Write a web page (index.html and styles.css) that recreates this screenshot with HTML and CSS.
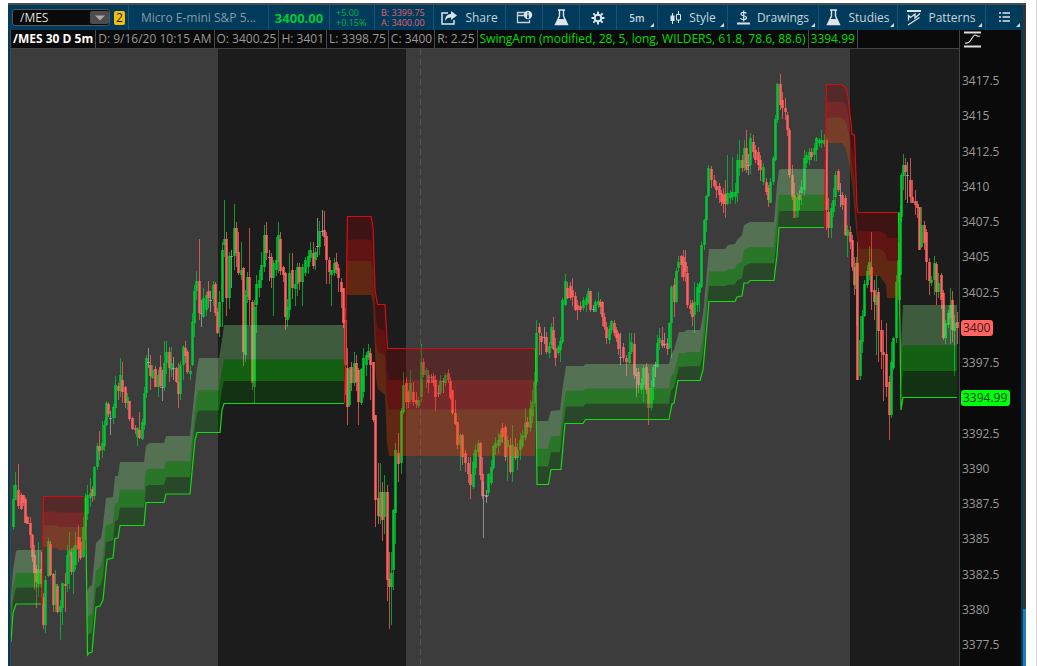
FILE: index.html
```html
<!DOCTYPE html>
<html lang="en">
<head>
<meta charset="utf-8">
<title>/MES chart</title>
<link rel="stylesheet" href="styles.css">
</head>
<body>
<div class="page">
<main class="window">
  <header class="toolbar">
    <div class="cell symbol">
      <div class="symbol-box"><input class="symbol-input" aria-label="Symbol" value="/MES"><button class="symbol-drop" aria-label="Choose symbol"><svg width="10" height="6" viewBox="0 0 10 6"><path d="M0 0.5H10L5 5.5Z" fill="#aaa"/></svg></button></div>
      <button class="link-badge">2</button>
    </div>
    <div class="cell name">Micro E-mini S&amp;P 5...</div>
    <div class="cell price">3400.00</div>
    <div class="cell pair up"><span>+5.00</span><span>+0.15%</span></div>
    <div class="cell pair down"><span>B: 3399.75</span><span>A: 3400.00</span></div>
    <button class="cell share"><svg width="17" height="14" viewBox="0 0 17 14"><path d="M7 2H1V13H13V9" fill="none" stroke="#dde3e6" stroke-width="1.5"/><path d="M10 0L16 4.5L10 9V6.5C7 6.500 5 7.500 4 10C4 6 6 3 10 3Z" fill="#dde3e6"/></svg>Share</button>
    <button class="cell info" aria-label="Info"><svg width="17" height="15" viewBox="0 0 17 15"><path d="M9 2.500H1.500V12.500H13.500V10M1.500 5.500H9" fill="none" stroke="#c8d0d5" stroke-width="1.3"/><circle cx="12" cy="5" r="4.200" fill="#dde3e6"/><path d="M12 4.500V7.500M12 2.200V3.500M11 7.500H13" stroke="#003b5c" stroke-width="1.4"/></svg></button>
    <button class="cell lab" aria-label="Lab"><svg width="15" height="17" viewBox="0 0 15 17"><path d="M4 1H11M5.500 1V7L1.500 15.500H13.500L9.500 7V1" fill="none" stroke="#dde3e6" stroke-width="1.4"/><path d="M4 10H11L13.500 16H1.500Z" fill="#dde3e6"/></svg></button>
    <button class="cell gear" aria-label="Settings"><svg width="14" height="14" viewBox="0 0 14 14"><g stroke="#dde3e6" stroke-width="2" fill="none"><circle cx="7" cy="7" r="3.300"/><path d="M7 .5V3M7 11V13.500M.5 7H3M11 7H13.500M2.400 2.400L4.200 4.200M9.800 9.800L11.600 11.600M2.400 11.600L4.200 9.800M9.800 4.200L11.600 2.400"/></g></svg></button>
    <button class="cell period more">5m</button>
    <button class="cell style more"><svg width="13" height="15" viewBox="0 0 13 15"><path d="M3.500 3V14M9.500 1V13" stroke="#dde3e6"/><path d="M1.500 5.500H5.500V11H1.500Z" fill="#dde3e6"/><path d="M7.500 4.500H11.500V10H7.500Z" fill="#003b5c" stroke="#dde3e6"/></svg>Style</button>
    <button class="cell drawings more"><svg width="13" height="15" viewBox="0 0 13 15"><path d="M9.500 3.500C8.500 2 4 1.800 4 4.200C4 6.500 9.500 5 9.500 7.700C9.500 10 4.500 10 3.500 8.200M6.700 .5V11.500" fill="none" stroke="#dde3e6" stroke-width="1.2"/><path d="M0 13.500H13" stroke="#dde3e6" stroke-width="2"/></svg>Drawings</button>
    <button class="cell studies more"><svg width="15" height="17" viewBox="0 0 15 17"><path d="M4 1H11M5.500 1V7L1.500 15.500H13.500L9.500 7V1" fill="none" stroke="#dde3e6" stroke-width="1.400"/><path d="M4 10H11L13.500 16H1.500Z" fill="#dde3e6"/></svg>Studies</button>
    <button class="cell patterns more"><svg width="14" height="16" viewBox="0 0 14 16"><path d="M0 1H14" stroke="#dde3e6" stroke-width="2"/><path d="M1.500 10.500V5.500L3.500 7.500L8 4V8L13 3.500M1 15L12.500 7.500" fill="none" stroke="#dde3e6" stroke-width="1.300"/></svg>Patterns</button>
    <button class="cell list more" aria-label="Menu"><svg width="11" height="11" viewBox="0 0 11 11"><path d="M0 1H2M3.500 1H11M0 5H2M3.500 5H11M0 9H2M3.500 9H11" stroke="#dde3e6" stroke-width="1.300"/></svg></button>
  </header>
  <div class="content">
    <section class="chart">
      <div class="legend">
        <b>/MES 30 D 5m</b><span>D: 9/16/20 10:15 AM</span><span>O: 3400.25</span><span>H: 3401</span><span>L: 3398.75</span><span>C: 3400</span><span>R: 2.25</span><span class="study">SwingArm (modified, 28, 5, long, WILDERS, 61.8, 78.6, 88.6)</span><span class="study">3394.99</span>
      </div>
      <div class="plot"><svg id="plot" viewBox="11 49 948 617" preserveAspectRatio="none" role="img" aria-label="Candlestick chart with SwingArm bands"></svg></div>
    </section>
    <aside class="axis">
      <button class="scale" aria-label="Axis scale"><svg width="17" height="17" viewBox="0 0 17 17"><path d="M0 1.500H17M0 15.500H17" stroke="#ddd" stroke-width="2"/><path d="M1 12C7 14 8 4 11 4C13 4 13 6 16 5" fill="none" stroke="#ddd" stroke-width="1.200"/></svg></button>
      <ul class="ticks"><li>3417.5</li><li>3415</li><li>3412.5</li><li>3410</li><li>3407.5</li><li>3405</li><li>3402.5</li><li class="last">3400</li><li>3397.5</li><li class="level">3394.99</li><li>3392.5</li><li>3390</li><li>3387.5</li><li>3385</li><li>3382.5</li><li>3380</li><li>3377.5</li></ul>
    </aside>
    <div class="rail"><div class="thumb"></div></div>
  </div>
</main>
</div>
<script src="chart.js"></script>
</body>
</html>
```
FILE: styles.css
```css
* { box-sizing: border-box; }
body { margin: 0; background: #fff; font-family: "Open Sans", "Noto Sans", sans-serif; font-size: 12px; line-height: 16px; color: #999; }
button { font: inherit; color: inherit; border: 0; padding: 0; background: none; }
.page { height: 100vh; padding: 3px 10px 0 8px; border-right: 1px solid #d4d4d4; overflow: hidden; }
.window { height: 100%; display: flex; flex-direction: column; background: #003b5c; border-top: 2px solid #4a4d50; }
.toolbar { flex: none; height: 25px; display: flex; padding-left: 2px; border-right: 3px solid #333; color: #c9d3d8; }
.cell { position: relative; flex: none; display: flex; align-items: center; justify-content: center; gap: 7px; white-space: nowrap; border-right: 1px solid #1d5170; }
.symbol { width: 119px; justify-content: flex-start; gap: 4px; padding-left: 2px; }
.symbol-box { display: flex; align-items: center; width: 98px; height: 17px; background: #0a0a0a; border: 1px solid #555; border-radius: 3px; }
.symbol-input { flex: 1; min-width: 0; height: 15px; padding: 0 7px; border: 0; background: none; color: #ddd; font: inherit; }
.symbol-drop { width: 19px; height: 13px; display: grid; place-items: center; background: #4c4c4c; border-radius: 2px; }
.link-badge { width: 11px; height: 14px; line-height: 13px; background: #f5bd0c; color: #222; border-radius: 2px; }
.name { flex: 1 1 139px; color: #8a98a0; }
.price { width: 61px; color: #00c832; font-size: 13px; font-weight: 700; }
.pair { flex-direction: column; gap: 0; font-size: 9px; line-height: 10px; align-items: flex-start; padding-left: 6px; }
.up { width: 45px; color: #00b43c; }
.down { width: 59px; color: #e0606c; }
.share { width: 72px; }
.info, .lab, .gear { width: 37px; }
.period { width: 41px; font-size: 10px; font-weight: 600; }
.style { width: 70px; }
.drawings { width: 91px; }
.studies { width: 79px; }
.patterns { width: 88px; }
.list { width: 37px; border-right: 0; }
.more::after { content: ""; position: absolute; right: 3px; bottom: 3px; border-style: solid; border-width: 0 0 4px 4px; border-color: transparent transparent #d5dce0; }
.content { flex: 1; min-height: 0; display: flex; padding-left: 2px; background: #003b5c; }
.chart { flex: 1; min-width: 0; display: flex; flex-direction: column; border-left: 1px solid #444; border-right: 1px solid #444; background: #0a0a0a; }
.legend { flex: none; height: 19px; display: flex; border-bottom: 1px solid #444; white-space: nowrap; line-height: 18px; }
.legend > * { padding: 0 2px; border-right: 1px solid #4a4a4a; }
.legend b { color: #fff; }
.legend .study { color: #00dc00; }
.plot { flex: 1; min-height: 0; }
.plot svg { display: block; width: 100%; height: 100%; }
.axis { width: 61px; flex: none; display: flex; flex-direction: column; background: #0a0a0a; border-top: 1px solid #0a0a0a; }
.scale { flex: none; width: 17px; height: 17px; margin-left: 4px; }
.ticks { flex: 1; display: flex; flex-direction: column; justify-content: space-between; align-items: flex-start; margin: 0; padding: 25px 0 13px 1px; list-style: none; }
.ticks li { height: 16px; padding: 0 1px; border-radius: 3px; }
.ticks .last { background: #ff6460; color: #451515; padding: 0 3px 0 2px; }
.ticks .level { background: #00ff0d; color: #073d07; padding: 0 3px 0 2px; }
.rail { width: 3px; flex: none; display: flex; flex-direction: column; justify-content: flex-end; margin-left: 2px; background: #333; }
.thumb { height: 9%; background: #1f7fbd; }
```
FILE: chart.js
```javascript
// Each candle: colour, x, high, body top, body bottom, low
const candles = `
g 13 485 499 527 530;g 15 472 485 500 500;r 18 464 490 506 509;r 21 493 495 509 510;r 23 495 495 503 506;r 25 497 499 523 523;r 27 516 517 524 524;r 30 517 523 535 548;r 32 534 535 557 562;r 34 545 555 573 590;r 36 565 569 582 608;g 38 542 570 584 597;r 41 552 569 584 597;r 43 593 597 625 629;g 45 576 580 625 633;g 48 538 541 576 577;r 50 541 544 575 576;r 53 573 574 605 612;g 55 570 584 605 612;r 57 584 586 612 613;g 60 600 606 612 640;g 62 583 583 608 625;r 65 573 584 586 612;g 67 545 555 584 592;g 69 532 550 555 589;r 71 548 552 572 575;g 73 546 548 572 594;g 75 532 545 565 570;r 78 525 537 549 562;r 80 537 542 558 560;g 83 517 527 557 558;g 85 493 498 527 540;g 87 485 495 514 520;g 90 478 493 498 507;r 92 486 489 496 502;g 94 466 467 496 500;g 97 443 446 467 470;r 99 431 446 451 460;g 102 421 443 450 458;g 104 420 425 446 451;g 106 401 403 425 426;r 108 402 404 414 417;w 110 411 418 419 435;g 113 404 407 418 424;g 115 376 385 408 418;r 118 383 386 391 400;g 120 358 375 391 397;r 122 362 380 392 403;r 125 386 387 403 408;g 127 393 397 403 410;r 129 401 401 419 421;r 132 417 418 429 430;r 135 425 428 430 434;g 137 427 428 437 446;r 139 412 430 438 439;g 142 419 422 439 440;g 144 387 393 425 430;g 146 355 358 393 398;w 148 348 362 363 368;r 150 355 365 376 390;g 152 365 370 378 379;r 155 366 369 387 387;g 158 370 375 387 397;r 160 355 367 386 388;w 162 370 387 388 401;g 164 341 363 387 391;g 166 341 352 363 374;r 169 347 352 368 382;g 171 347 363 370 377;w 173 357 368 369 380;r 176 367 368 382 383;r 178 363 382 394 408;g 180 361 365 394 400;g 183 345 347 365 380;r 185 341 348 356 363;r 187 350 352 372 374;g 190 366 371 374 380;g 192 313 322 365 366;g 194 285 291 323 337;g 196 271 281 291 300;r 199 239 281 313 320;w 201 300 313 314 327;g 203 288 298 317 318;g 206 292 295 310 316;r 208 281 291 298 308;w 210 291 300 301 312;g 213 281 285 299 306;r 215 282 284 313 316;r 217 308 312 333 334;g 219 291 302 327 337;g 222 242 250 302 327;g 224 200 239 245 257;r 226 232 239 298 316;g 229 252 256 298 309;w 231 250 256 257 288;g 234 204 228 256 270;r 236 222 228 253 267;r 238 232 252 273 275;g 241 242 270 275 280;r 243 267 268 352 366;g 245 290 295 355 362;g 247 272 277 297 303;r 249 228 277 300 325;r 252 300 302 383 390;g 254 300 307 387 403;g 256 275 284 305 333;g 259 270 280 288 297;g 261 252 265 280 288;g 264 225 235 267 272;r 266 222 235 253 260;w 269 250 257 258 281;r 271 253 257 278 288;g 273 260 263 278 316;g 276 237 260 270 276;g 278 222 235 262 273;r 280 232 239 271 275;r 283 266 267 275 282;r 285 272 273 317 330;g 287 299 307 320 327;g 289 253 273 310 318;r 292 253 270 288 299;g 295 270 284 289 306;g 297 263 267 284 296;r 299 263 267 282 290;g 302 264 267 282 306;g 305 257 260 273 276;g 308 250 256 267 274;g 310 242 250 258 262;r 313 242 253 266 269;g 315 248 252 260 270;w 317 218 246 247 257;g 319 221 231 247 255;w 322 210 231 232 236;r 324 211 230 237 246;r 326 232 236 260 284;r 329 257 260 272 284;g 331 270 270 275 306;g 334 258 263 273 276;r 336 253 262 270 274;r 338 264 268 278 292;r 341 278 282 292 308;r 343 288 288 323 328;r 345 308 320 365 395;r 347 348 368 407 425;g 349 367 370 405 407;r 351 362 367 383 391;g 354 352 363 383 386;r 356 355 363 382 391;r 358 368 370 402 425;g 361 368 369 403 405;g 363 348 358 392 398;g 366 352 355 365 376;g 368 344 351 358 360;r 370 348 353 365 400;r 373 362 362 420 422;r 375 415 415 500 527;r 378 463 498 516 524;g 380 463 492 517 524;r 382 482 492 520 541;g 384 475 492 517 534;r 387 485 492 580 601;r 389 552 579 587 629;g 391 552 573 587 625;g 393 509 510 570 590;g 395 443 450 513 544;r 398 433 453 464 482;g 401 408 411 463 474;g 403 372 385 412 414;r 406 377 383 402 409;r 408 390 392 402 408;g 410 370 383 400 404;r 413 382 392 402 406;r 416 392 400 404 408;g 418 397 400 406 408;g 421 344 362 397 402;r 423 358 362 375 377;g 426 368 370 375 388;r 428 370 375 383 393;w 431 374 377 378 383;r 433 373 376 383 386;r 435 375 380 397 411;w 438 385 393 394 397;g 440 375 381 393 395;w 443 378 381 382 393;g 445 373 375 383 386;r 448 369 373 380 383;r 450 377 381 398 400;r 452 390 390 413 415;r 455 400 413 424 425;r 457 422 422 445 449;g 460 433 435 445 471;r 462 434 435 457 465;r 465 450 453 463 472;r 468 457 463 474 483;r 470 457 474 485 499;g 473 453 462 487 489;g 475 445 450 468 475;g 478 440 443 452 457;r 480 442 443 475 480;r 482 457 474 496 499;w 483 482 495 496 538;w 486 490 495 497 503;g 488 473 474 493 496;g 491 460 467 483 485;g 493 445 446 468 470;g 495 437 443 448 455;g 498 433 440 446 454;g 500 430 435 442 446;r 502 423 428 437 443;r 505 425 427 457 461;g 507 436 440 447 481;r 510 438 445 472 474;g 512 425 445 472 482;r 515 438 447 458 460;g 517 443 450 458 470;g 520 433 440 450 460;g 522 430 435 446 448;g 525 408 423 438 440;r 527 417 422 427 434;g 530 400 408 428 432;g 532 390 402 416 423;g 534 372 382 403 407;g 536 320 333 382 385;r 539 323 327 333 355;r 541 333 336 342 355;w 544 327 337 338 344;r 546 332 337 352 354;g 549 342 346 353 358;g 551 323 327 345 348;r 553 317 330 349 350;r 555 338 348 358 366;g 558 345 347 353 355;g 560 337 341 350 362;g 562 298 300 342 344;g 565 274 281 305 306;r 567 282 288 298 299;r 570 282 286 298 300;r 572 278 290 297 306;r 575 292 296 310 311;r 577 300 305 310 320;r 580 302 306 310 312;g 583 297 300 308 311;g 586 294 298 305 312;g 588 288 291 302 304;r 590 291 291 310 312;w 593 305 309 310 312;g 595 300 302 312 312;g 598 292 301 305 308;r 600 299 302 307 314;r 602 301 302 317 326;r 604 313 317 327 330;r 606 322 327 338 344;g 609 325 329 340 344;g 611 320 321 330 334;r 614 320 323 333 336;r 616 327 330 338 342;r 618 332 334 349 355;w 620 333 357 358 365;r 623 343 347 358 362;r 626 355 358 362 376;g 629 333 352 363 364;g 631 333 342 352 354;r 634 333 344 375 379;w 636 368 375 376 397;r 638 368 372 385 393;g 641 378 383 390 394;g 643 365 368 385 402;r 646 363 367 390 394;r 648 373 388 408 425;g 651 380 388 408 411;g 653 365 367 387 400;w 655 362 365 366 377;g 657 335 343 367 368;g 659 328 338 343 350;r 662 327 340 346 348;w 664 333 344 345 348;r 667 338 343 349 355;g 669 322 323 348 349;g 671 285 287 323 358;r 674 278 285 302 317;g 676 268 271 302 303;g 678 256 262 268 272;r 681 255 256 265 277;r 683 250 257 277 281;r 685 250 262 272 282;r 687 266 273 305 308;r 690 300 305 309 314;r 692 300 303 317 326;g 694 282 302 315 333;g 697 283 287 305 312;g 699 282 284 293 312;g 701 242 245 287 288;g 704 219 220 245 250;g 706 195 196 220 232;g 708 165 168 196 197;r 711 166 169 180 188;r 714 175 180 186 188;r 716 181 186 190 198;r 719 183 186 195 203;r 721 190 193 202 206;r 723 188 195 204 213;r 725 180 194 204 218;g 727 155 193 204 205;g 730 190 193 198 204;g 732 157 192 197 200;g 735 183 192 197 204;g 737 154 160 193 202;g 739 140 160 168 176;r 742 155 160 168 172;g 744 140 148 168 171;r 746 130 148 170 173;w 748 154 165 166 175;g 750 133 138 165 174;r 753 135 142 152 158;r 755 145 150 160 163;r 758 147 152 165 171;r 760 155 160 170 181;g 763 163 167 182 185;r 766 178 182 192 195;r 768 185 188 200 207;g 770 178 182 203 203;g 773 156 158 182 185;g 775 115 119 160 161;g 777 83 84 120 123;r 780 74 84 105 110;r 782 92 100 108 119;r 785 98 108 112 120;r 787 112 115 130 136;r 789 128 130 175 178;r 792 165 175 197 200;r 794 183 195 218 218;g 797 193 197 217 218;r 799 190 195 200 210;g 801 180 187 193 205;g 804 150 158 190 196;g 806 152 155 163 168;g 809 148 152 160 165;r 811 148 152 157 160;g 814 143 148 155 161;g 816 137 138 150 161;g 819 138 140 143 147;g 821 130 140 143 148;g 824 134 140 144 147;r 826 138 140 210 230;r 828 198 212 228 238;g 831 203 208 228 238;g 833 188 200 212 217;g 835 171 175 197 206;r 838 169 171 190 192;w 840 183 195 196 207;r 842 192 195 205 210;r 845 195 198 235 236;g 847 225 230 236 257;r 850 226 232 242 249;r 852 235 240 267 271;r 854 257 267 285 295;g 856 257 263 289 326;r 857 242 263 380 380;g 860 316 340 376 380;g 862 310 316 342 353;g 864 280 284 316 317;g 867 265 271 285 288;g 869 246 262 275 280;r 871 232 267 292 310;r 874 280 290 302 320;g 876 275 295 305 355;r 878 288 292 331 362;r 881 320 330 352 369;r 883 330 352 355 401;r 886 323 354 387 397;r 889 376 382 415 440;g 891 342 362 415 418;g 893 337 338 368 370;g 896 275 282 338 343;g 898 242 260 282 300;g 900 205 212 275 300;g 901 173 175 217 222;g 903 154 165 176 190;r 905 158 165 172 200;w 907 162 175 176 203;r 910 158 180 197 203;r 912 180 197 203 203;r 915 190 201 205 215;r 917 201 204 208 218;r 919 207 207 250 250;g 921 207 225 247 248;r 924 221 225 243 250;r 926 229 232 262 280;r 929 258 262 281 295;g 931 276 280 283 286;g 934 256 263 280 295;r 936 262 264 292 305;g 938 273 283 292 298;r 941 273 275 300 309;r 943 290 293 338 340;g 945 320 323 338 344;g 948 310 313 325 328;g 950 288 305 318 344;r 952 291 300 330 342;g 954 315 323 331 376;r 957 312 322 328 344`;

// Each point: x, swing line, far edge of the band
const bands = [
  ["up", "11,642,597 13,613,570 16,603,551 18,603,550 42,603,550"],
  ["dn", "43,497,547 57,497,548 59,497,550 85,497,550"],
  ["up", "87,655,592 89,653,587 92,652,585 96,607,543 101,604,538 103,598,525 106,560,498 113,558,497 115,539,476 118,538,476 120,526,462 144,526,462 146,503,446 149,502,443 164,502,443 166,494,436 190,494,436 195,440,387 197,432,368 199,432,358 219,432,358 222,410,340 224,404,325 344,404,325"],
  ["dn", "347,217,295 371,217,295 373,227,303 376,292,378 378,304,389 385,304,395 387,342,443 389,349,456 535,349,456"],
  ["up", "537,485,421 548,485,421 551,469,411 560,469,410 563,442,385 566,423,366 583,423,366 586,420,364 669,420,364 671,405,355 674,403,350 679,381,332 684,381,332 687,381,330 700,381,330 703,370,315 709,301,249 725,301,249 728,301,245 735,301,244 737,297,240 742,296,235 744,283,225 750,280,222 774,280,222 777,260,185 779,228,170 781,228,169 825,228,169"],
  ["dn", "826,85,143 842,85,143 846,87,149 849,101,163 852,134,183 854,135,205 857,207,240 858,213,276 880,213,276 886,213,285 887,213,298 898,213,298"],
  ["up", "901,410,345 903,398,305 957,398,305"]
];
const lines = [
  ["up", "11,642 13,613 16,604 41,604"],
  ["dn", "42,604 43.5,496.5 85,496.5"],
  ["up", "85.500,496.500 87.500,655 89,653 92,652 96,607 100,606 103,600 107,559.500 113,558 115,538.500 118,538 120,525.500 144,525.500 146,502.500 164,502.500 166,494 190,494 195,440 197,432.500 220,432.500 222,410 224,403.500 344,403.500"],
  ["dn", "344.500,403.500 347.500,216.500 371,216.500 373,227 375,290 377.500,304.500 385,304.500 387.500,348.500 535,348.500"],
  ["up", "535.500,348.500 537,484.500 548.500,484.500 551,469.500 561,469.500 565,423.500 583,423.500 585.500,419.500 669,419.500 672,404 674,403 678,380.500 700,380.500 703,370 709,301.500 735,301.500 737,297 742,296 744,283 748,283 750,280.500 774,280.500 777,255 779,227.500 824,227.500"],
  ["dn", "824.500,227.500 826.500,84.500 842,84.500 846,88 848,97 851,123 852,134 854.500,135 857,207 858,212.500 898,212.500"],
  ["up", "898.500,212.500 901,410 903,397.500 957,397.500"]
];
const ink = { g: "#00c832", r: "#ff625f", w: "#a8a8a8" };
const fills = { up: ["#006400", "#00ff00", "#90ee90"], dn: ["#8b0000", "#ff0000", "#ff4500"] };
const cuts = [0, 0.29, 0.565, 1];

let out = '<path fill="#1c1c1c" d="M11 49H959V666H11Z"/><path fill="#3c3c3c" d="M11 49H218V666H11ZM406 49H850V666H406Z"/>';
out += '<path d="M420.5 49V666" stroke="#555" stroke-dasharray="6 4" shape-rendering="crispEdges"/>';
for (const row of candles.trim().split(";")) {
  const [c, x, hi, top, bottom, lo] = row.trim().split(" ");
  out += `<rect x="${x}" y="${hi}" width="1" height="${lo - hi}" fill="${ink[c]}" opacity=".75"/>`;
  out += `<rect x="${x - 0.75}" y="${top}" width="2.5" height="${Math.max(1, bottom - top)}" fill="${ink[c]}"/>`;
}
for (const [side, text] of bands) {
  const pts = text.split(" ").map(p => p.split(",").map(Number));
  for (let i = 0; i < 3; i++) {
    const edge = k => pts.map(p => `${p[0]},${(p[1] + (p[2] - p[1]) * k).toFixed(1)}`);
    out += `<polygon points="${edge(cuts[i]).concat(edge(cuts[i + 1]).reverse()).join(" ")}" fill="${fills[side][i]}" opacity=".3"/>`;
  }
}
for (const [side, pts] of lines) {
  out += `<polyline points="${pts}" fill="none" stroke="${side === "up" ? "#12dc12" : "#d80c10"}" stroke-width="1.2"/>`;
}
document.getElementById("plot").innerHTML = out;
```
